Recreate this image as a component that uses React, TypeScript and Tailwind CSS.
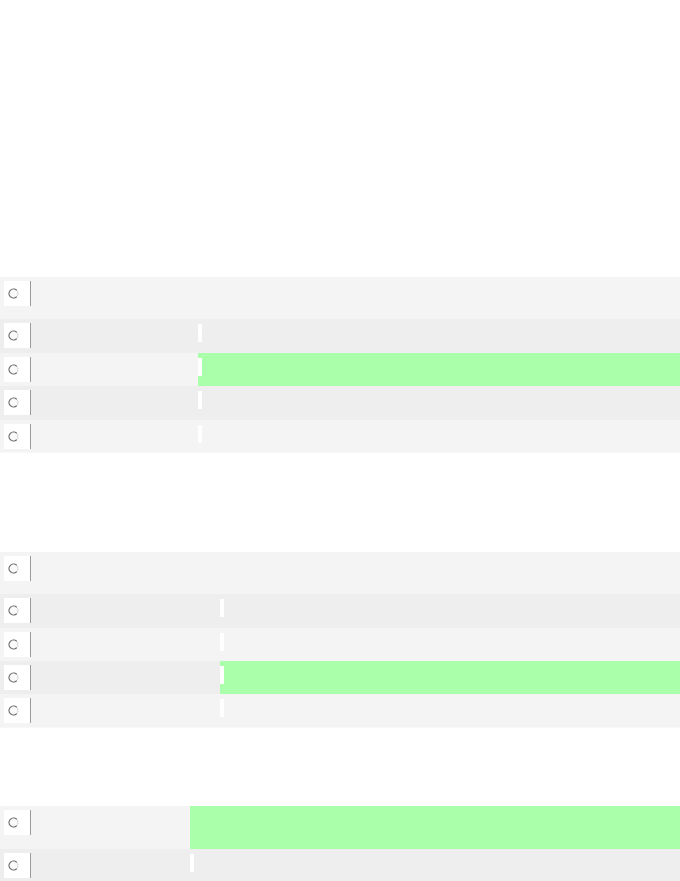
import React from "react";

type Row = { h: string; tall?: boolean; win?: boolean; odd: boolean };

const Radio: React.FC = () => (
  <svg width="11" height="11" viewBox="0 0 11 11" className="block">
    <circle cx="5.5" cy="5.5" r="4.5" fill="#fafafa" stroke="#cfcfcf" strokeWidth="1" />
    <path d="M8.7 2.3 A4.5 4.5 0 1 0 8.7 8.7" fill="none" stroke="#6e6e6e" strokeWidth="1.2" />
  </svg>
);

const PollRow: React.FC<{ row: Row; labelW: string }> = ({ row, labelW }) => (
  <div className={`flex w-full ${row.h} ${row.odd ? "bg-[#f4f4f4]" : "bg-[#eeeeee]"}`}>
    <div className={`flex ${labelW} shrink-0 items-start p-[4px]`}>
      <div className="flex h-[25px] w-[27px] items-center border-r border-[#9a9a9a] bg-white pl-[4px]">
        <Radio />
      </div>
    </div>
    <div className={`flex flex-1 items-start pt-[5px] ${row.win ? "bg-[#aaffaa]" : ""}`}>
      {!row.tall && <div className="h-[18px] w-[4px] bg-white" />}
    </div>
  </div>
);

const Poll: React.FC<{ rows: Row[]; labelW: string }> = ({ rows, labelW }) => (
  <div className="w-full border-b border-[#f8f8f8]">
    {rows.map((r, i) => (
      <PollRow key={i} row={r} labelW={labelW} />
    ))}
  </div>
);

export default function App() {
  return (
    <div className="min-h-[881px] w-[680px] overflow-hidden bg-white pt-[277px] font-['Liberation_Sans',sans-serif]">
      <Poll
        labelW="w-[198px]"
        rows={[
          { h: "h-[42px]", tall: true, odd: true },
          { h: "h-[34px]", odd: false },
          { h: "h-[33px]", odd: true, win: true },
          { h: "h-[34px]", odd: false },
          { h: "h-[32px]", odd: true },
        ]}
      />
      <div className="h-[99px]" />
      <Poll
        labelW="w-[220px]"
        rows={[
          { h: "h-[42px]", tall: true, odd: true },
          { h: "h-[34px]", odd: false },
          { h: "h-[33px]", odd: true },
          { h: "h-[33px]", odd: false, win: true },
          { h: "h-[33px]", odd: true },
        ]}
      />
      <div className="h-[78px]" />
      <Poll
        labelW="w-[190px]"
        rows={[
          { h: "h-[43px]", tall: true, odd: true, win: true },
          { h: "h-[33px]", odd: false },
        ]}
      />
    </div>
  );
}
